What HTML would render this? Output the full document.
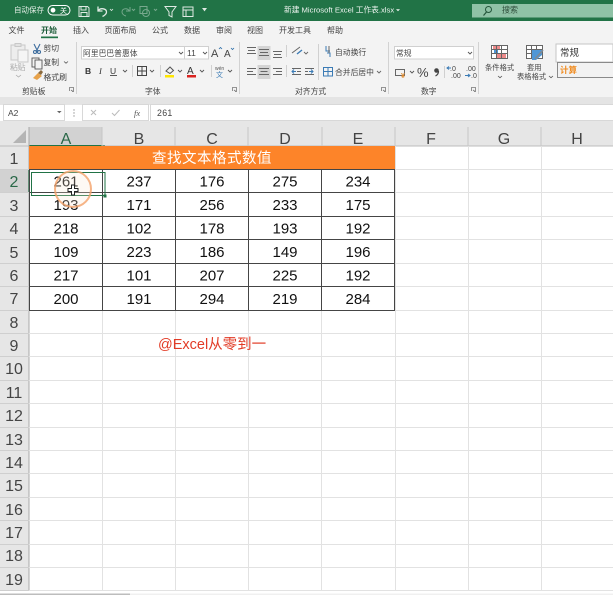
<!DOCTYPE html>
<html><head><meta charset="utf-8"><style>
html,body{margin:0;padding:0;background:#fff;width:613px;height:595px;overflow:hidden}
svg{display:block;filter:blur(.35px)}
text{font-family:"Liberation Sans","Noto Sans CJK SC",sans-serif}
.u{font-size:7.8px;fill:#444}
.t{font-size:8px;fill:#444}
.n{font-size:15px;fill:#111;text-anchor:middle}
.h{font-size:16px;fill:#444;text-anchor:middle}
.r{font-size:16px;fill:#444;text-anchor:middle}
</style></head><body>
<svg width="613" height="595" viewBox="0 0 613 595" xmlns="http://www.w3.org/2000/svg">
<rect width="613" height="595" fill="#fff"/>
<!-- title bar -->
<rect width="613" height="21" fill="#217346"/>
<text x="14" y="12.5" style="font-size:7.5px" fill="#e8f0ea">自动保存</text>
<rect x="48" y="5.5" width="22" height="9.5" rx="4.7" fill="#217346" stroke="#fff"/>
<circle cx="53" cy="10.2" r="2.4" fill="#fff"/>
<text x="60" y="13" style="font-size:7px" fill="#fff">关</text>
<g fill="none" stroke="#dfeae3" stroke-width="1">
<path d="M79 6.500h8.500l1.500 1.500v8.500h-10z M81 6.500v3.500h5v-3.500 M81 16.500v-4h6v4"/>
<path d="M98 6.500v4.500h4.500 M98.500 10.500c2-3 8-2 8 1.500 0 2-2 3.500-4 4.500" stroke-width="1.300"/>
<path d="M110 9l1.500 1.500 1.500-1.500" stroke-width=".8"/>
<g opacity=".45"><path d="M130 7v4h-4 M129 10.500c-2-3-7-2-7 1.500 0 2 2 3.500 4 4"/><path d="M132 9l1.500 1.500 1.500-1.500"/><rect x="140" y="6.500" width="7" height="7"/><circle cx="146" cy="13" r="3.500"/><path d="M154 9l1.500 1.500 1.500-1.500"/></g>
<path d="M165 6.500h11l-4 5.500v5l-3-1.500v-3.500z"/>
<rect x="183" y="7" width="10" height="9.500"/><path d="M183 10h10 M186 10v6.500"/>
<path d="M203 8.500l1.500 2 1.500-2z" fill="#dfeae3"/>
</g>
<text x="284" y="12.500" style="font-size:7.700px" fill="#eef4f0">新建 Microsoft Excel 工作表.xlsx</text>
<path d="M396 9.200l2 2 2-2z" fill="#eef4f0"/>
<rect x="472" y="4" width="141" height="13.500" fill="#8fc2a6"/>
<g fill="none" stroke="#23553a"><circle cx="488.500" cy="9.500" r="3"/><path d="M486.500 12l-3 3.500" stroke-width="1.200"/></g>
<text x="502" y="12.500" style="font-size:8px" fill="#2c4a38">搜索</text>
<!-- tabs -->
<rect y="21" width="613" height="20" fill="#f3f3f3"/>
<g>
<text class="t" x="8.500" y="33">文件</text>
<text class="t" x="41" y="33" style="fill:#1c5c39;font-weight:bold">开始</text>
<text class="t" x="73" y="33">插入</text>
<text class="t" x="104.500" y="33">页面布局</text>
<text class="t" x="152" y="33">公式</text>
<text class="t" x="184" y="33">数据</text>
<text class="t" x="216" y="33">审阅</text>
<text class="t" x="247" y="33">视图</text>
<text class="t" x="279" y="33">开发工具</text>
<text class="t" x="327" y="33">帮助</text>
</g>
<rect x="41" y="36.500" width="17" height="1.700" fill="#217346"/>
<!-- ribbon -->
<rect y="41" width="613" height="56" fill="#f3f3f3"/>
<g stroke="#d2d2d2"><path d="M76.500 42v52 M239.500 42v52 M388.500 42v52 M478.500 42v52"/></g>
<!-- clipboard -->
<g fill="none" stroke="#c8c8c8"><rect x="11" y="45" width="14" height="15" fill="#ededed"/><rect x="18" y="50" width="10" height="12" fill="#f5f5f5"/><rect x="15" y="43.500" width="6" height="3" fill="#e2e2e2"/></g>
<text x="10" y="70" class="u" style="fill:#aaa">粘贴</text>
<path d="M16 75l2.500 2 2.500-2" fill="none" stroke="#aaa" stroke-width=".8"/>
<g fill="none" stroke="#3d6d9e" stroke-width="1.100"><path d="M34 44l4 8 M40 44l-4 8"/><circle cx="35" cy="52" r="1.500"/><circle cx="39" cy="52" r="1.500"/></g>
<text x="43.500" y="51" class="u">剪切</text>
<g fill="none" stroke="#555" stroke-width=".9"><rect x="32" y="58" width="7" height="9"/><rect x="35" y="60" width="7" height="9" fill="#f3f3f3"/></g>
<text x="43.500" y="65" class="u">复制</text>
<path d="M64 61.500l2 1.700 2-1.700" fill="none" stroke="#555" stroke-width=".8"/>
<path d="M33 78l5-5 4 3-5 4z" fill="#e7a24a"/><path d="M38 73l3-3 2 2-2 3z" fill="#8a6a3f"/>
<text x="43.500" y="80" class="u">格式刷</text>
<text x="22" y="94" class="u">剪贴板</text>
<!-- launchers -->
<g fill="none" stroke="#777" stroke-width=".8"><path d="M69.500 91v-3.500h4v4h-1.500 M71 90l2 1.500"/><path d="M232.500 91v-3.500h4v4h-1.500 M234 90l2 1.500"/><path d="M381.500 91v-3.500h4v4h-1.500 M383 90l2 1.500"/><path d="M471.500 91v-3.500h4v4h-1.500 M473 90l2 1.500"/></g>
<!-- font -->
<rect x="81.500" y="46.500" width="103" height="12.500" fill="#fff" stroke="#d0d0d0"/>
<text x="83" y="56" class="u">阿里巴巴普惠体</text>
<path d="M179 52l2 2 2-2" fill="none" stroke="#555" stroke-width=".9"/>
<rect x="184.500" y="46.500" width="24" height="12.500" fill="#fff" stroke="#d0d0d0"/>
<text x="187" y="56" style="font-size:8.500px" fill="#444">11</text>
<path d="M203 52l2 2 2-2" fill="none" stroke="#555" stroke-width=".9"/>
<text x="211" y="57" style="font-size:11px" fill="#444">A</text><path d="M219 49l1.500-1.500 1.500 1.500" stroke="#2a6ca8" fill="none" stroke-width=".8"/>
<text x="224" y="57" style="font-size:10px" fill="#444">A</text><path d="M231 48l1.500 1.500 1.500-1.500" stroke="#2a6ca8" fill="none" stroke-width=".8"/>
<text x="85" y="74" style="font-size:8.500px;font-weight:bold" fill="#333">B</text>
<text x="99" y="74" style="font-size:8.500px;font-style:italic;font-family:'Liberation Serif',serif" fill="#333">I</text>
<text x="110" y="74" style="font-size:8.500px" fill="#333">U</text><path d="M110 75.500h7" stroke="#333" stroke-width=".8"/>
<g fill="none" stroke="#555" stroke-width=".9"><path d="M123 70l2 2 2-2"/><path d="M150 70l2 2 2-2"/><path d="M178 70l2 2 2-2"/><path d="M200 70l2 2 2-2"/><path d="M228 70l2 2 2-2"/></g>
<path d="M132.500 65v12 M160.500 65v12 M211.500 65v12" stroke="#d0d0d0"/>
<g fill="none" stroke="#444" stroke-width="1"><rect x="137.500" y="66.500" width="9" height="9"/><path d="M142 66.500v9 M137.500 71h9"/></g>
<path d="M166 71l4-4 3.500 3.500-3.500 3z" fill="none" stroke="#555"/>
<rect x="165" y="75" width="9" height="2.500" fill="#ffe600"/>
<text x="187" y="74" style="font-size:10px" fill="#333">A</text>
<rect x="187" y="75" width="9" height="2.500" fill="#d9231f"/>
<text x="215" y="70" style="font-size:5px" fill="#555">wén</text>
<text x="216" y="77" style="font-size:7px" fill="#3b7bb5">文</text>
<text x="145" y="94" class="u">字体</text>
<!-- align -->
<rect x="257.500" y="46" width="13" height="14" fill="#d4d4d4"/>
<rect x="257.500" y="65" width="13" height="14" fill="#d4d4d4"/>
<g fill="none" stroke="#666" stroke-width="1">
<path d="M247 47.500h9 M248 50.500h7 M247 53.500h9"/>
<path d="M259 49.500h10 M260 52.500h8 M259 55.500h10"/>
<path d="M273 51.500h9 M274 54.500h7 M273 57.500h9"/>
<path d="M247 68.500h9 M247 71.500h6 M247 74.500h9"/>
<path d="M259 68.500h10 M260.500 71.500h7 M259 74.500h10"/>
<path d="M273 68.500h9 M276 71.500h6 M273 74.500h9"/>
<path d="M292 68.500h9 M292 74.500h9 M297 71.500h4"/><path d="M296 71.500h-4 M294 69.500l-2 2 2 2" stroke="#3b7bb5"/>
<path d="M305 68.500h9 M305 74.500h9 M305 71.500h3"/><path d="M309 71.500h4 M311 69.500l2 2-2 2" stroke="#3b7bb5"/>
<path d="M286.500 65v12 M286.500 45v12 M318.500 44v36" stroke="#d0d0d0"/>
<path d="M292 53l8-6" stroke="#666"/><path d="M297 54l5-4" stroke="#3b7bb5" stroke-width="1.400"/>
<path d="M304 52l2 2 2-2" stroke-width=".9"/>
<path d="M326 46v5h4 M330 57v-4h-3" stroke="#3b7bb5"/><path d="M329 46v7" stroke="#666"/>
<rect x="323.500" y="67.500" width="9" height="8.500" stroke="#3b7bb5"/><path d="M323.500 71.500h9 M328 67.500v8.500" stroke="#3b7bb5"/>
<path d="M377 71l2 2 2-2" stroke-width=".9"/>
</g>
<text x="335" y="55" class="u">自动换行</text>
<text x="335" y="75" class="u">合并后居中</text>
<text x="295" y="94" class="u">对齐方式</text>
<!-- number -->
<rect x="394.500" y="46.500" width="79" height="12.500" fill="#fff" stroke="#d0d0d0"/>
<text x="396" y="56" class="u">常规</text>
<path d="M468 52l2 2 2-2" fill="none" stroke="#555" stroke-width=".9"/>
<rect x="395.500" y="69.500" width="9" height="6" fill="none" stroke="#666"/><text x="401" y="78" style="font-size:7px;font-weight:bold" fill="#e08a2c">¥</text>
<path d="M410 71l2 2 2-2" fill="none" stroke="#555" stroke-width=".9"/>
<text x="417" y="77" style="font-size:13px" fill="#444">%</text>
<circle cx="436.500" cy="70.500" r="2.300" fill="#444"/><path d="M438.500 71c0 2.500-1 4-3 5" fill="none" stroke="#444" stroke-width="1.200"/>
<path d="M444.500 66v12" stroke="#d0d0d0"/>
<text x="450" y="71" style="font-size:7px" fill="#444">.0</text><text x="451" y="78" style="font-size:7px" fill="#444">.00</text><path d="M451 68h-4 M449 66.500l-2 1.500 2 1.500" stroke="#3b7bb5" fill="none"/>
<text x="466" y="71" style="font-size:7px" fill="#444">.00</text><text x="471" y="78" style="font-size:7px" fill="#444">.0</text><path d="M465 75.500h5 M468 74l2 1.500-2 1.500" stroke="#3b7bb5" fill="none"/>
<text x="421" y="94" class="u">数字</text>
<!-- styles -->
<g stroke="#666" fill="none"><rect x="491.500" y="45.500" width="16" height="13" fill="#fff"/><rect x="493" y="46" width="7" height="4" fill="#ed8b8b" stroke="none"/><rect x="494" y="50" width="4" height="4" fill="#4f97d6" stroke="none"/><rect x="496" y="54" width="10" height="4" fill="#ed8b8b" stroke="none"/><path d="M496.500 45.500v13 M501.500 45.500v13 M491.500 49.500h16 M491.500 53.500h16"/></g>
<text x="485" y="70" style="font-size:7.300px" fill="#444">条件格式</text>
<path d="M498 76l2 1.700 2-1.700" fill="none" stroke="#555" stroke-width=".8"/>
<g stroke="#666" fill="none"><rect x="526.500" y="45.500" width="16" height="13" fill="#fff"/><path d="M531.500 45.500v13 M536.500 45.500v13 M526.500 49.500h16 M526.500 53.500h16"/></g>
<path d="M532 50h10v5l-6 5h-4z" fill="#4f97d6"/>
<path d="M535 59l8-9" stroke="#7f8a93" stroke-width="1.600"/>
<text x="527" y="70" style="font-size:7.300px" fill="#444">套用</text>
<text x="517" y="79" style="font-size:7.300px" fill="#444">表格格式</text>
<path d="M549 76l2 1.700 2-1.700" fill="none" stroke="#555" stroke-width=".8"/>
<rect x="556" y="44" width="57" height="18" fill="#fff" stroke="#c6c6c6"/>
<text x="560" y="56" style="font-size:9.500px" fill="#333">常规</text>
<rect x="557.500" y="62.500" width="56" height="15" fill="#f2f2f2" stroke="#8a8a8a"/>
<text x="560" y="73" style="font-size:8.500px;font-weight:bold" fill="#f08a1d">计算</text>
<!-- formula bar -->
<rect y="97" width="613" height="8" fill="#e4e4e4"/>
<rect y="105" width="613" height="16" fill="#fff"/>
<rect x="3.500" y="104.500" width="61" height="16" fill="#fff" stroke="#d8d8d8"/>
<text x="8" y="116" style="font-size:8.500px" fill="#444">A2</text>
<path d="M57 111l2.300 2.300 2.300-2.300z" fill="#666"/>
<g fill="#999"><circle cx="74" cy="110" r=".7"/><circle cx="74" cy="113" r=".7"/><circle cx="74" cy="116" r=".7"/></g>
<rect x="82.500" y="104.500" width="66" height="16" fill="#fff" stroke="#d8d8d8"/>
<path d="M91 110l5 5 M96 110l-5 5" stroke="#bbb" fill="none"/>
<path d="M112 113l2.500 2.500 5-5.500" stroke="#bbb" fill="none"/>
<text x="134" y="116" style="font-size:8.500px;font-style:italic;font-family:'Liberation Serif',serif" fill="#555">fx</text>
<rect x="150.500" y="104.500" width="463" height="16" fill="#fff" stroke="#d8d8d8"/>
<text x="157" y="116" style="font-size:8.800px;letter-spacing:.3px" fill="#444">261</text>
<!-- headers -->
<rect y="121" width="613" height="25" fill="#e6e6e6"/>
<rect x="0" y="146" width="29" height="445" fill="#e6e6e6"/>
<rect x="29" y="127" width="73" height="19" fill="#d2d2d2"/>
<rect x="0" y="169.400" width="29" height="23.400" fill="#d2d2d2"/>
<path d="M26 130v13h-13z" fill="#b4b4b4"/>
<rect x="29" y="145" width="76" height="1.500" fill="#217346"/>
<rect x="28" y="169.400" width="1.500" height="23.400" fill="#217346"/>
<path d="M0 146h29 M102 146h511" stroke="#bcbcbc" stroke-width="1"/>
<path d="M29 127v464" stroke="#a8a8a8" stroke-width="1"/>
<g stroke="#c6c6c6"><path d="M102 127v19 M175 127v19 M248 127v19 M322 127v19 M395 127v19 M468 127v19 M541 127v19"/></g>
<g>
<text class="h" x="66" y="144" style="fill:#2a6848">A</text>
<text class="h" x="139" y="144">B</text><text class="h" x="212" y="144">C</text><text class="h" x="285" y="144">D</text>
<text class="h" x="358" y="144">E</text><text class="h" x="431" y="144">F</text><text class="h" x="504" y="144">G</text><text class="h" x="577" y="144">H</text>
</g>
<g>
<text class="r" x="14" y="164">1</text><text class="r" x="14" y="187" style="fill:#2a6848">2</text><text class="r" x="14" y="211">3</text><text class="r" x="14" y="234">4</text><text class="r" x="14" y="258">5</text><text class="r" x="14" y="281">6</text><text class="r" x="14" y="304">7</text><text class="r" x="14" y="328">8</text><text class="r" x="14" y="351">9</text><text class="r" x="14" y="374">10</text><text class="r" x="14" y="398">11</text><text class="r" x="14" y="421">12</text><text class="r" x="14" y="445">13</text><text class="r" x="14" y="468">14</text><text class="r" x="14" y="491">15</text><text class="r" x="14" y="515">16</text><text class="r" x="14" y="538">17</text><text class="r" x="14" y="561">18</text><text class="r" x="14" y="585">19</text>
</g>
<g stroke="#cfcfcf"><path d="M0 169.500h29 M0 192.500h29 M0 216.500h29 M0 239.500h29 M0 263.500h29 M0 286.500h29 M0 310.500h29 M0 333.500h29 M0 356.500h29 M0 380.500h29 M0 403.500h29 M0 427.500h29 M0 450.500h29 M0 473.500h29 M0 497.500h29 M0 520.500h29 M0 544.500h29 M0 567.500h29 M0 590.500h29"/></g>
<!-- grid -->
<g stroke="#e2e2e2">
<path d="M29 333.500h584 M29 356.500h584 M29 380.500h584 M29 403.500h584 M29 427.500h584 M29 450.500h584 M29 473.500h584 M29 497.500h584 M29 520.500h584 M29 544.500h584 M29 567.500h584 M29 590.500h584"/>
<path d="M395 169.500h218 M395 192.500h218 M395 216.500h218 M395 239.500h218 M395 263.500h218 M395 286.500h218 M395 310.500h218"/>
<path d="M102.500 310v281 M175.500 310v281 M248.500 310v281 M321.500 310v281 M395.500 310v281 M468.500 146v445 M541.500 146v445"/>
<path d="M395.500 146v164"/>
</g>
<!-- title row -->
<rect x="29" y="146" width="366" height="23" fill="#fd8429"/>
<text x="212" y="163" style="font-size:14.500px;letter-spacing:.5px;text-anchor:middle" fill="#fff">查找文本格式数值</text>
<!-- table borders -->
<g stroke="#454545" stroke-width="1" fill="none">
<path d="M29 169.500h366 M29 192.500h366 M29 216.500h366 M29 239.500h366 M29 263.500h366 M29 286.500h366 M29 310.500h366"/>
<path d="M29.500 169v142 M102.500 169v142 M175.500 169v142 M248.500 169v142 M321.500 169v142 M394.500 169v142"/>
</g>
<g>
<text class="n" x="66" y="186.500">261</text><text class="n" x="139" y="186.500">237</text><text class="n" x="212" y="186.500">176</text><text class="n" x="285" y="186.500">275</text><text class="n" x="358" y="186.500">234</text>
<text class="n" x="66" y="210">193</text><text class="n" x="139" y="210">171</text><text class="n" x="212" y="210">256</text><text class="n" x="285" y="210">233</text><text class="n" x="358" y="210">175</text>
<text class="n" x="66" y="233.500">218</text><text class="n" x="139" y="233.500">102</text><text class="n" x="212" y="233.500">178</text><text class="n" x="285" y="233.500">193</text><text class="n" x="358" y="233.500">192</text>
<text class="n" x="66" y="257">109</text><text class="n" x="139" y="257">223</text><text class="n" x="212" y="257">186</text><text class="n" x="285" y="257">149</text><text class="n" x="358" y="257">196</text>
<text class="n" x="66" y="280.500">217</text><text class="n" x="139" y="280.500">101</text><text class="n" x="212" y="280.500">207</text><text class="n" x="285" y="280.500">225</text><text class="n" x="358" y="280.500">192</text>
<text class="n" x="66" y="304">200</text><text class="n" x="139" y="304">191</text><text class="n" x="212" y="304">294</text><text class="n" x="285" y="304">219</text><text class="n" x="358" y="304">284</text>
</g>
<!-- red note -->
<text x="158" y="349" style="font-size:14.500px" fill="#e23b26">@Excel从零到一</text>
<!-- selection -->
<rect x="31.500" y="172.500" width="73.500" height="23" fill="none" stroke="#217346" stroke-width="1"/>
<rect x="103.500" y="194.500" width="3" height="3" fill="#217346"/>
<circle cx="73" cy="189" r="18" fill="#fde6d3" fill-opacity=".25" stroke="#f4a26a" stroke-width="2" stroke-opacity=".8"/>
<path d="M71.500 185h3v3.500h3.500v3h-3.500v3.500h-3v-3.500h-3.500v-3h3.500z" fill="#fff" stroke="#222" stroke-width="1"/>
<!-- bottom -->
<rect x="0" y="593.500" width="130" height="1.500" fill="#bdbdbd"/>
<rect x="130" y="593.500" width="483" height="1.500" fill="#f0f0f0"/>
</svg>
</body></html>
